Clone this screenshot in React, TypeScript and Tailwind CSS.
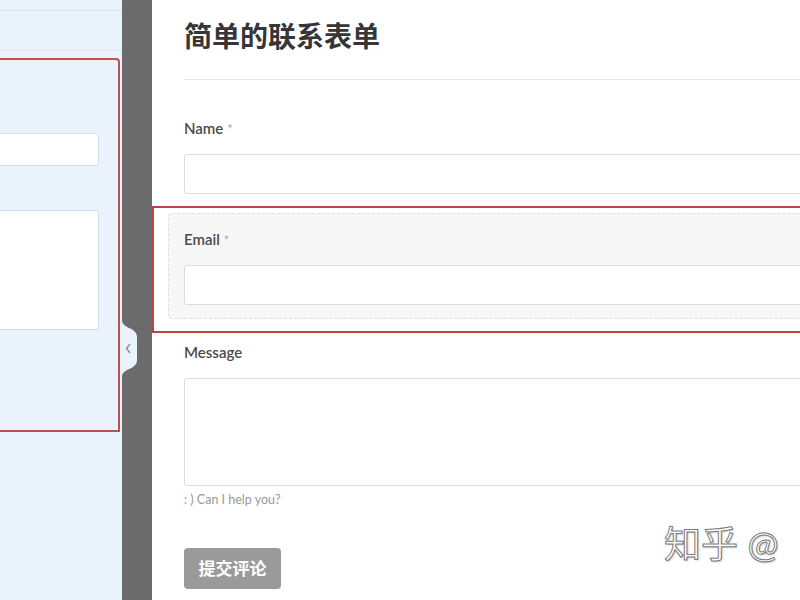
const font = "font-['Lato','Noto_Sans_CJK_SC',sans-serif]";

const Field = ({ label, required }: { label: string; required?: boolean }) => (
  <div>
    <div className="text-[15px] leading-[20px] font-semibold text-[#4a4a4a]">
      {label}
      {required && <span className="ml-1 font-normal text-[#aaa] text-[13px]">*</span>}
    </div>
    <div className="mt-[15px] h-[40px] w-full rounded-[3px] border border-[#dcdcdc] bg-white" />
  </div>
);

export default function App() {
  return (
    <div className={`relative flex h-[600px] w-[800px] overflow-hidden bg-white ${font}`}>
      {/* left panel */}
      <div className="w-[122px] shrink-0 bg-[#eaf3fc]">
        <div className="h-[11px] border-b border-[#d6e3f0]" />
        <div className="h-[40px] border-b border-[#dde8f3]" />
        <div className="mt-[7px] -ml-[10px] mr-[2px] rounded-tr-[4px] border-2 border-[#c0504d] pt-[73px] pb-[100px] pr-[19px]">
          <div className="h-[33px] rounded-r-[3px] border border-l-0 border-[#d3dbe4] bg-white" />
          <div className="mt-[44px] h-[120px] rounded-r-[3px] border border-l-0 border-[#d3dbe4] bg-white" />
        </div>
      </div>

      {/* divider */}
      <div className="relative w-[30px] shrink-0 bg-[#6b6b6b]">
        <svg className="absolute left-0 top-[320px]" width="15" height="57" viewBox="0 0 15 57">
          <path d="M0 0 C0 9 15 7 15 17 L15 40 C15 50 0 48 0 57 Z" fill="#eaf3fc" />
          <path d="M8 24 L4.5 28.5 L8 33" fill="none" stroke="#8a8f96" strokeWidth="1.4" />
        </svg>
      </div>

      {/* right panel */}
      <div className="w-[700px] shrink-0">
        <div className="ml-8 h-[80px] border-b border-[#e6e6e6] pt-[19px]">
          <h1 className="text-[28px] leading-[35px] font-bold text-[#363636]">简单的联系表单</h1>
        </div>

        <div className="mt-[38px] px-8">
          <Field label="Name" required />
        </div>

        <div className="mt-[12px] border-2 border-r-0 border-[#b8453f] pt-[5px] pb-[12px] pl-[14px]">
          <div className="rounded-l-[4px] border border-r-0 border-dashed border-[#dedede] bg-[#f7f7f7] pt-[15px] pb-[13px] pl-[15px]">
            <Field label="Email" required />
          </div>
        </div>

        <div className="mt-[9px] px-8">
          <div className="text-[15px] leading-[20px] font-semibold text-[#4a4a4a]">Message</div>
          <div className="mt-[16px] h-[108px] w-full rounded-[3px] border border-[#dcdcdc] bg-white" />
          <p className="mt-[6px] text-[12.5px] leading-[16px] text-[#999]">: ) Can I help you?</p>
          <button className="mt-[40px] h-[41px] w-[97px] rounded-[4px] bg-[#9a9a9a] text-[17px] font-bold text-white">
            提交评论
          </button>
        </div>
      </div>

      {/* watermark */}
      <div className="absolute left-[664px] top-[522px] whitespace-nowrap text-[37px] leading-[44px] text-white [-webkit-text-stroke:1px_#7a7a7a] [text-shadow:1px_1px_2px_rgba(0,0,0,0.25)]">
        知乎 @
      </div>
    </div>
  );
}
